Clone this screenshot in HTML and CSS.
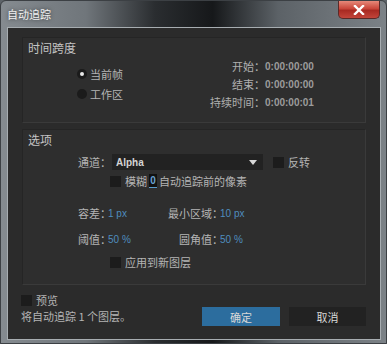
FILE: index.html
```html
<!DOCTYPE html>
<html lang="zh">
<head>
<meta charset="utf-8">
<link rel="stylesheet" href="styles.css">
</head>
<body>
<div class="window">
  <div class="titlebar">
    <span class="title">自动追踪</span>
    <div class="close"><svg width="12" height="10" viewBox="0 0 12 10"><path d="M2 1 L10 9 M10 1 L2 9" stroke="#fff" stroke-width="2.4" stroke-linecap="square"/></svg></div>
  </div>
  <div class="content">
    <div class="group g1">
      <div class="gtitle">时间跨度</div>
      <div class="g1body">
        <div class="radios">
          <div class="radio-row"><span class="radio on"></span><span>当前帧</span></div>
          <div class="radio-row"><span class="radio"></span><span>工作区</span></div>
        </div>
        <div class="times">
          <div class="trow"><span class="tl">开始：</span><span class="tv">0:00:00:00</span></div>
          <div class="trow"><span class="tl">结束：</span><span class="tv">0:00:00:00</span></div>
          <div class="trow"><span class="tl">持续时间：</span><span class="tv">0:00:00:01</span></div>
        </div>
      </div>
    </div>
    <div class="group g2">
      <div class="gtitle">选项</div>
      <div class="row r-chan">
        <span class="lbl">通道：</span>
        <div class="select"><span>Alpha</span><svg width="8" height="5" viewBox="0 0 8 5"><path d="M0 0 H8 L4 5 Z" fill="#d8d8d8"/></svg></div>
        <span class="cb"></span><span class="lbl">反转</span>
      </div>
      <div class="row r-blur">
        <span class="cb"></span><span class="lbl">模糊</span><span class="num">0</span><span class="lbl">自动追踪前的像素</span>
      </div>
      <div class="row r-tol">
        <span class="lbl">容差<span class="colon">：</span></span><span class="val w1">1 px</span>
        <span class="lbl">最小区域<span class="colon">：</span></span><span class="val">10 px</span>
      </div>
      <div class="row r-thr">
        <span class="lbl">阈值<span class="colon">：</span></span><span class="val w2">50 %</span>
        <span class="lbl">圆角值<span class="colon">：</span></span><span class="val">50 %</span>
      </div>
      <div class="row r-apply">
        <span class="cb"></span><span class="lbl">应用到新图层</span>
      </div>
    </div>
    <div class="footer">
      <div class="fleft">
        <div class="prev"><span class="cb"></span><span class="lbl">预览</span></div>
        <div class="note">将自动追踪 1 个图层。</div>
      </div>
      <div class="btn ok">确定</div>
      <div class="btn cancel">取消</div>
    </div>
  </div>
</div>
</body>
</html>
```
FILE: styles.css
```css
* { box-sizing: border-box; }
html, body { margin: 0; padding: 0; background: #5d6368; }
body {
  font-family: "Noto Sans CJK SC", "Liberation Sans", sans-serif;
  font-size: 11px;
  color: #b4b4b4;
}
.window {
  width: 387px;
  height: 344px;
  display: flex;
  flex-direction: column;
  background: linear-gradient(90deg, #858b90 0%, #70767b 22%, #2a2d30 40%, #16181a 55%, #5c6267 72%, #7c8287 100%);
  border: 1px solid #3c4044;
  border-radius: 6px 6px 0 0;
  overflow: hidden;
}
.titlebar {
  height: 26px;
  flex: none;
  display: flex;
  align-items: flex-start;
  justify-content: space-between;
  padding-left: 6px;
}
.title {
  margin-top: 5px;
  color: #f0f0f0;
  font-size: 11px;
  line-height: 16px;
  text-shadow: 0 0 4px rgba(0,0,0,0.6);
}
.close {
  width: 42px;
  height: 18px;
  margin-right: 6px;
  background: linear-gradient(#e6897a 0%, #c9463a 45%, #a82a22 55%, #c2453a 100%);
  border: 1px solid #5a2a28;
  border-top: none;
  border-radius: 0 0 5px 5px;
  display: flex;
  align-items: center;
  justify-content: center;
}
.content {
  flex: 1;
  margin: 0 5px 3px 6px;
  background: #2b2b2b;
  border: 1px solid #a7adb1;
  padding: 9px 14px 0 14px;
  display: flex;
  flex-direction: column;
}
.group {
  background: #2e2e2e;
  border: 1px solid #252525;
  border-right-color: #3a3a3a;
  border-bottom-color: #3a3a3a;
  position: relative;
}
.gtitle {
  font-size: 12px;
  color: #c4c4c4;
  line-height: 16px;
  padding: 2px 0 0 5px;
}
.g1 { height: 86px; }
.g1body {
  display: flex;
  justify-content: space-between;
  padding: 0 52px 0 54px;
}
.radios { padding-top: 8px; }
.radio-row {
  display: flex;
  align-items: center;
  height: 20px;
  gap: 3px;
}
.radio {
  width: 10px;
  height: 10px;
  border-radius: 50%;
  background: #1b1b1b;
  position: relative;
}
.radio.on::after {
  content: "";
  position: absolute;
  left: 3px; top: 3px;
  width: 4px; height: 4px;
  border-radius: 50%;
  background: #e8e8e8;
}
.times { padding-top: 1px; }
.trow {
  display: flex;
  justify-content: flex-end;
  align-items: center;
  height: 18px;
}
.tl { color: #b0b0b0; }
.tv {
  font-family: "Liberation Sans", sans-serif;
  font-weight: bold;
  font-size: 10px;
  color: #9c9c9c;
  width: 48px;
}
.g2 {
  margin-top: 6px;
  height: 156px;
}
.row {
  display: flex;
  align-items: center;
}
.r-chan { margin-top: 6px; padding-left: 55px; height: 16px; }
.select {
  width: 151px;
  height: 16px;
  background: #222222;
  display: flex;
  align-items: center;
  justify-content: space-between;
  padding: 0 6px 0 4px;
  margin-right: 10px;
  margin-left: 1px;
}
.select span {
  font-family: "Liberation Sans", sans-serif;
  font-weight: bold;
  font-size: 10px;
  color: #d4d4d4;
}
.cb {
  width: 11px;
  height: 11px;
  background: #1c1c1c;
  display: inline-block;
  margin-right: 4px;
  flex: none;
}
.r-blur { margin-top: 4px; padding-left: 87px; height: 14px; }
.num {
  font-family: "Liberation Sans", sans-serif;
  font-weight: bold;
  font-size: 10px;
  color: #6aa3d0;
  background: #111;
  border-bottom: 1px solid #5a9ccc;
  width: 8px;
  height: 14px;
  text-align: center;
  line-height: 13px;
  margin: 0 2px 0 2px;
}
.colon { letter-spacing: -3px; }
.val {
  font-family: "Liberation Sans", sans-serif;
  font-size: 10px;
  color: #4f8dbf;
}
.val.w1 { width: 60px; }
.val.w2 { width: 71px; }
.r-tol { margin-top: 18px; padding-left: 55px; height: 14px; }
.r-thr { margin-top: 12px; padding-left: 55px; height: 14px; }
.r-apply { margin-top: 9px; padding-left: 87px; height: 14px; }
.footer {
  display: flex;
  align-items: flex-end;
  margin-top: 9px;
  margin-left: -1px;
  margin-right: 0;
}
.fleft { flex: 1; }
.prev { display: flex; align-items: center; height: 12px; }
.note { margin-top: 3px; line-height: 14px; color: #b4b4b4; }
.btn {
  height: 19px;
  display: flex;
  align-items: center;
  justify-content: center;
  color: #d8d8d8;
  margin-bottom: -3px;
}
.ok { background: #2c6d9e; margin-right: 9px; width: 78px; }
.cancel { background: #222222; width: 77px; }
```
